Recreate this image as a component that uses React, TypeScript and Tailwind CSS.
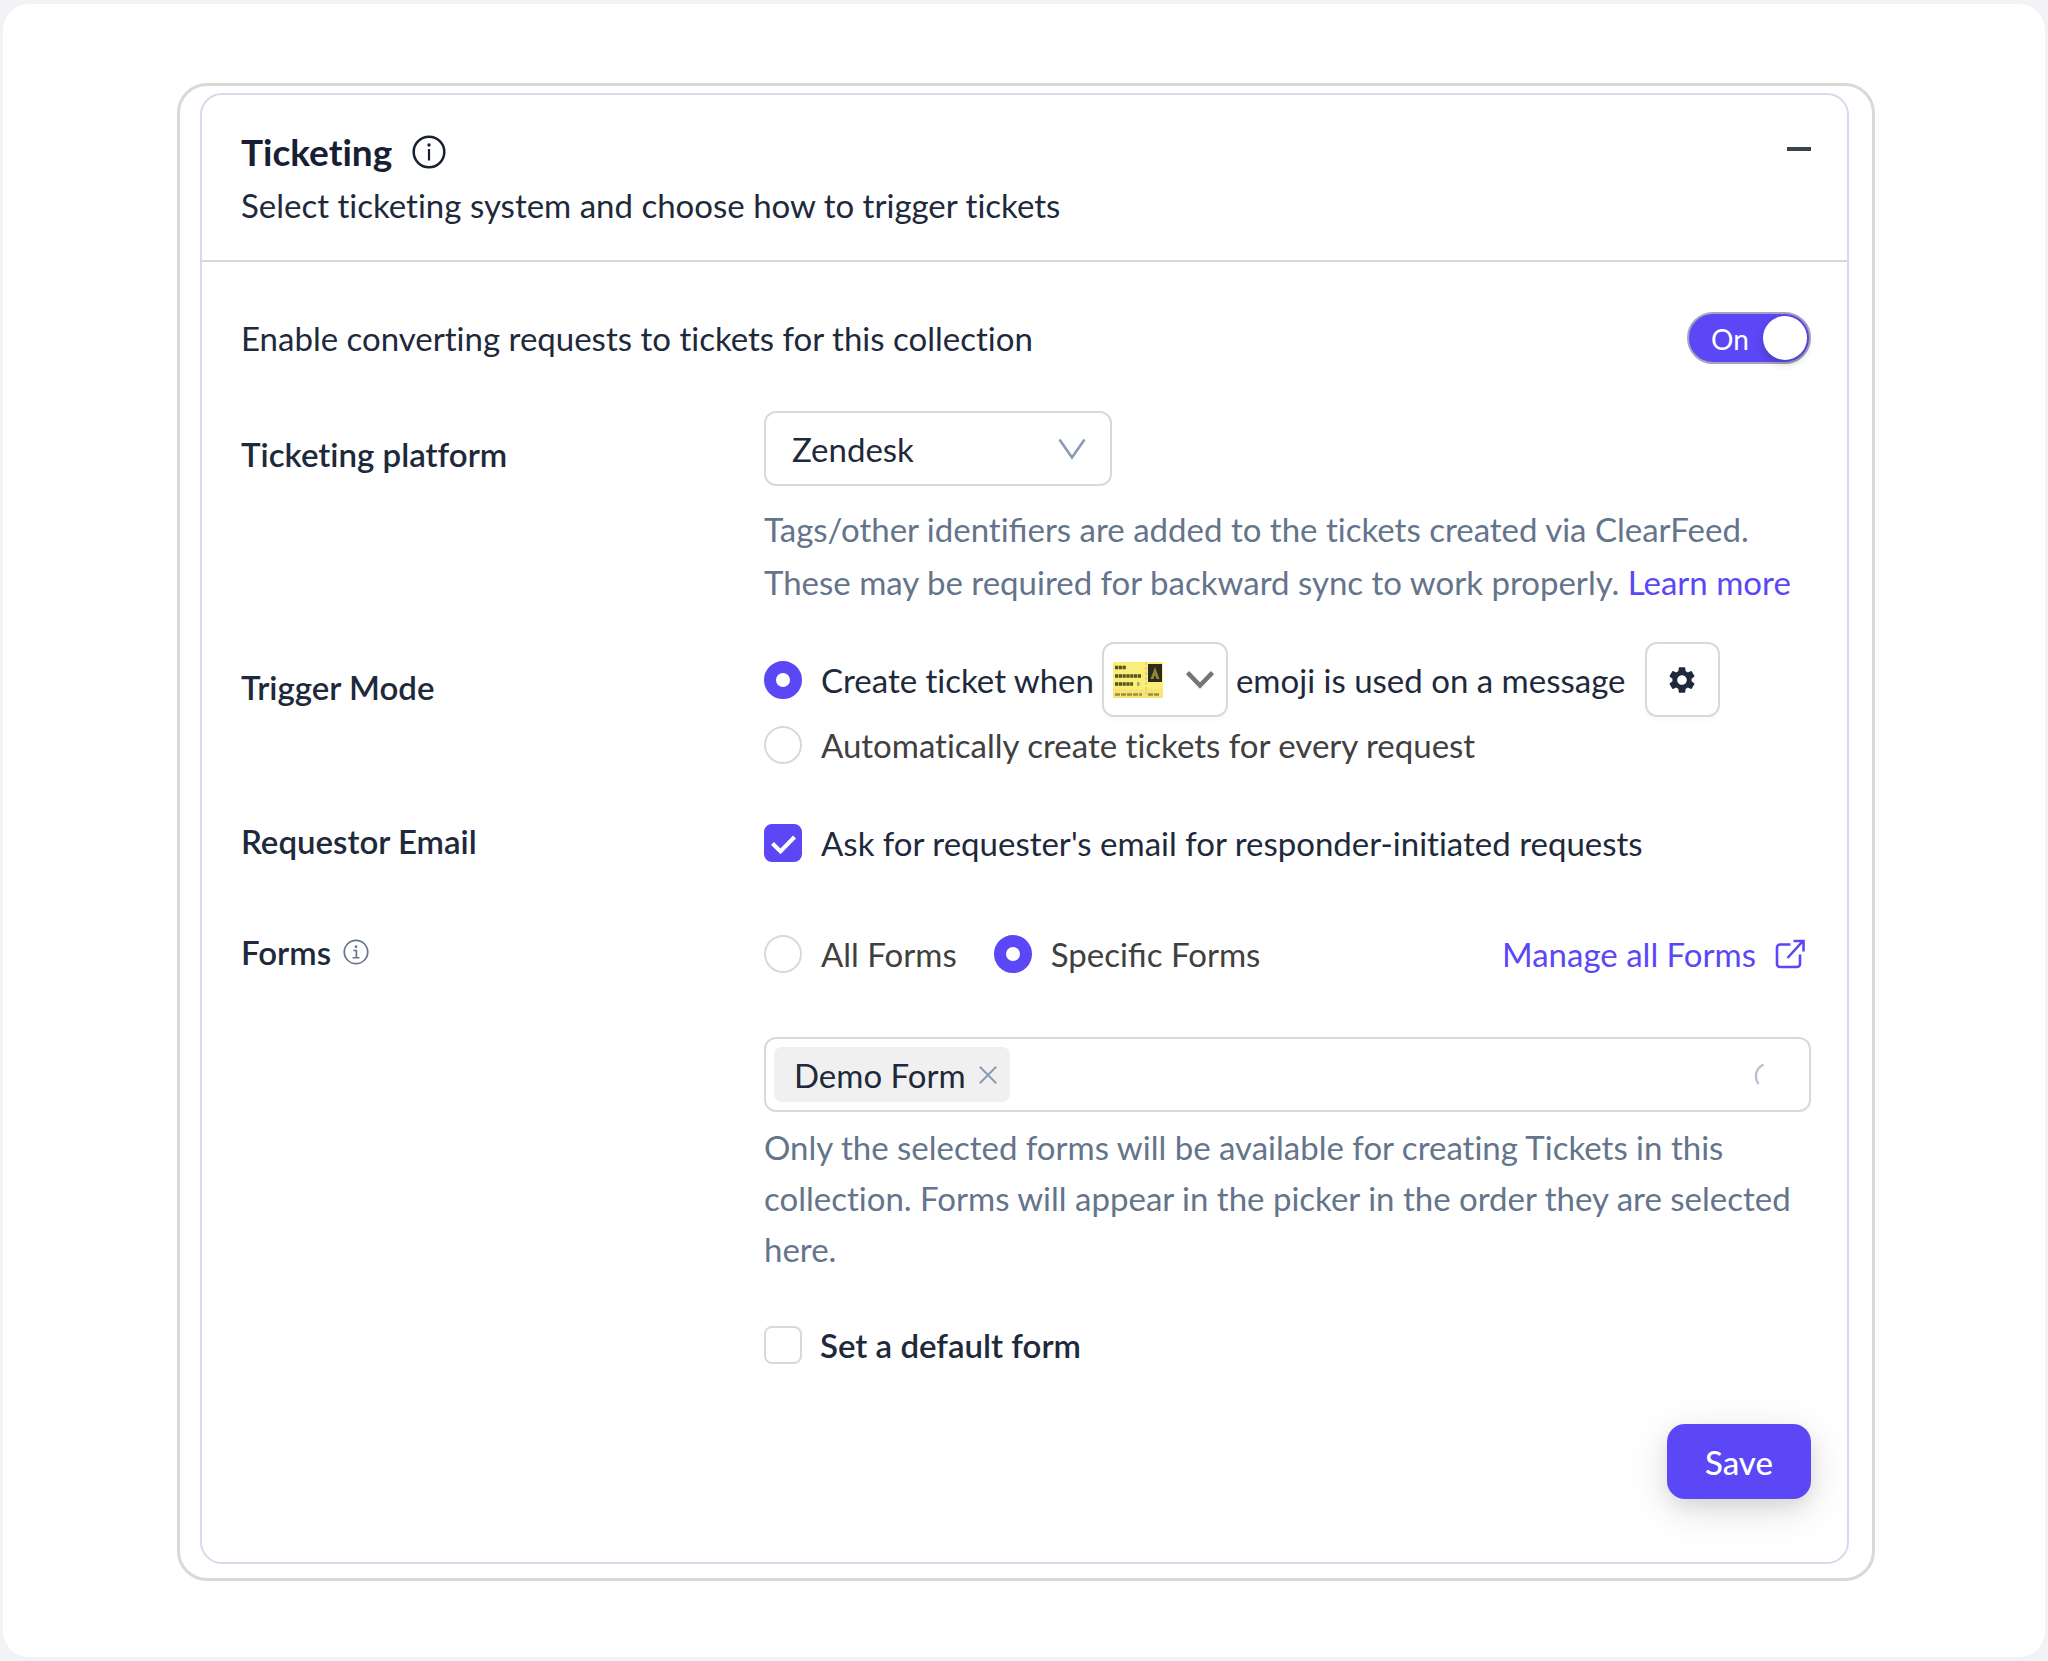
import React, { useState } from "react";

const labelClass = "text-[33px] leading-[48px] font-semibold text-[#1e293b]";
const radioClass =
  "size-[38px] shrink-0 appearance-none rounded-full border-2 border-[#d9d9d9] bg-white checked:border-[12px] checked:border-[#5b47f5]";
const checkClass =
  "col-start-1 row-start-1 size-[38px] appearance-none rounded-lg border-2 border-[#d9d9d9] bg-white checked:border-[#5b47f5] checked:bg-[#5b47f5]";

function Row({ label, labelPad, className, children }: {
  label: React.ReactNode;
  labelPad: string;
  className: string;
  children: React.ReactNode;
}) {
  return (
    <div className={`grid grid-cols-[523px_1fr] items-start ${className}`}>
      <div className={`${labelClass} ${labelPad}`}>{label}</div>
      <div className="min-w-0">{children}</div>
    </div>
  );
}

function InfoIcon({ className, serif }: { className: string; serif?: boolean }) {
  return (
    <svg viewBox="0 0 34 34" className={className} fill="none" stroke="currentColor" aria-hidden="true">
      <circle cx="17" cy="17" r="15.3" strokeWidth={serif ? 2.2 : 2.5} />
      <circle cx="17" cy="10" r="1.7" fill="currentColor" stroke="none" />
      {serif ? (
        <path d="M13.5 15h4v9.5M12.5 24.5h9" strokeWidth="2.2" />
      ) : (
        <path d="M17 14v11.5" strokeWidth="2.2" />
      )}
    </svg>
  );
}

function TicketArt() {
  return (
    <svg viewBox="0 0 50 36" className="h-9 w-[50px]" aria-hidden="true">
      <rect width="50" height="36" fill="#fbee78" />
      <rect y="27" width="50" height="9" fill="#f8e472" />
      <path d="M33 0v36" stroke="#d8cf8a" strokeWidth="1.5" strokeDasharray="3 2" />
      <g fill="none" stroke="#57521f" strokeWidth="3.6">
        <path d="M2 5.500h11" strokeDasharray="3.200 .6" />
        <path d="M2 14h26" strokeDasharray="3.200 .6" />
        <path d="M2 22h18" strokeDasharray="3.200 .6" />
        <path d="M24 22h2.500" opacity=".5" />
      </g>
      <path d="M2 32.500h27M35 32.500h12" stroke="#9b8f3a" strokeWidth="2.500" strokeDasharray="5 1" />
      <rect x="35" y="2" width="14" height="18" fill="#2b2a1b" />
      <path d="M42 5l4.500 12h-3L42 13l-1.500 4h-3z" fill="#8f863a" />
    </svg>
  );
}

function CheckBox({ id, checked, onChange }: { id: string; checked: boolean; onChange: () => void }) {
  return (
    <span className="grid shrink-0 place-items-center">
      <input id={id} type="checkbox" className={checkClass} checked={checked} onChange={onChange} />
      {checked && (
        <svg viewBox="0 0 38 38" className="pointer-events-none col-start-1 row-start-1 size-[38px]" fill="none" stroke="#fff" strokeWidth="4" aria-hidden="true">
          <path d="M8.500 19.500l8 8L30.500 13" />
        </svg>
      )}
    </span>
  );
}

function Fi() {
  return <span className="[font-variant-ligatures:normal]">fi</span>;
}

export default function App() {
  const [on, setOn] = useState(true);
  const [mode, setMode] = useState("emoji");
  const [ask, setAsk] = useState(true);
  const [scope, setScope] = useState("specific");
  const [hasDefault, setHasDefault] = useState(false);

  return (
    <div className="min-h-screen bg-[#f1f3f6] px-[3px] py-1 font-['Lato',sans-serif] text-[33px] leading-[52px] text-[#1e293b] [font-variant-ligatures:none]">
      <div className="min-h-[calc(100vh-8px)] rounded-[26px] bg-white pt-[79px] pr-[170px] pb-[75px] pl-[174px]">
        <main className="rounded-[30px] border-[3px] border-[#d9d9d9] pt-[7px] pr-[23px] pb-[14px] pl-5">
          <section className="rounded-[22px] border-2 border-[#d6daeb]">
            <header className="flex items-start justify-between border-b-2 border-[#d9d9d9] pt-8 pr-9 pb-[29px] pl-[39px]">
              <div>
                <h1 className="mb-0.5 flex items-center gap-5 text-[37px] leading-[50px] font-bold text-[#172033]">
                  Ticketing
                  <button type="button" aria-label="About ticketing">
                    <InfoIcon className="size-[34px]" />
                  </button>
                </h1>
                <p>Select ticketing system and choose how to trigger tickets</p>
              </div>
              <button type="button" aria-label="Collapse section" className="grid h-11 w-6 place-items-center">
                <span className="h-1 w-6 bg-[#3b424f]" />
              </button>
            </header>

            <div className="pt-[50px] pr-9 pb-[63px] pl-[39px]">
              <div className="flex items-center justify-between">
                <span id="enable-label">Enable converting requests to tickets for this collection</span>
                <button
                  type="button"
                  role="switch"
                  aria-checked={on}
                  aria-labelledby="enable-label"
                  onClick={() => setOn(!on)}
                  className="flex h-[52px] w-[124px] items-center justify-between rounded-full border-2 border-[#a5a3bd] bg-[#5b47f5] pr-0.5 pl-[22px] text-[28px] text-white"
                >
                  <span className="pt-0.5">On</span>
                  <span className="size-11 rounded-full bg-white shadow-[0_4px_8px_rgba(0,35,11,0.2)]" />
                </button>
              </div>

              <Row className="mt-[47px]" labelPad="pt-[19px]" label={<label htmlFor="platform">Ticketing platform</label>}>
                <div className="grid w-[348px] items-center">
                  <select id="platform" className="col-start-1 row-start-1 h-[75px] w-full appearance-none rounded-xl border-2 border-[#d9d9d9] bg-white px-[26px]">
                    <option>Zendesk</option>
                  </select>
                  <svg viewBox="0 0 28 22" className="pointer-events-none col-start-1 row-start-1 mr-[26px] h-[22px] w-7 justify-self-end" fill="none" stroke="#8a9bb3" strokeWidth="2.600" aria-hidden="true">
                    <path d="M1.500 1.500L14 19.500 26.500 1.500" />
                  </svg>
                </div>
                <p className="mt-[17px] leading-[53px] text-[#64748b]">
                  Tags/other identi<Fi />ers are added to the tickets created via ClearFeed. These may be required for backward sync to work properly.{" "}
                  <a href="#learn-more" className="text-[#5b47f5]">Learn more</a>
                </p>
              </Row>

              <Row className="mt-[33px]" labelPad="pt-[21px]" label="Trigger Mode">
                <div className="flex items-center">
                  <input id="mode-emoji" name="mode" type="radio" className={radioClass} checked={mode === "emoji"} onChange={() => setMode("emoji")} />
                  <label htmlFor="mode-emoji" className="ml-[19px]">Create ticket when</label>
                  <button type="button" aria-label="Choose emoji" className="ml-2 flex h-[75px] w-[126px] items-center justify-between rounded-xl border-2 border-[#d9d9d9] pr-3 pl-[9px] shadow-[0_4px_4px_rgba(0,0,0,0.02)]">
                    <TicketArt />
                    <svg viewBox="0 0 28 20" className="h-5 w-7" fill="none" stroke="#757575" strokeWidth="4.500" aria-hidden="true">
                      <path d="M1.500 2.500L14 15.500 26.500 2.500" />
                    </svg>
                  </button>
                  <span className="ml-2">emoji is used on a message</span>
                  <button type="button" aria-label="Emoji settings" className="ml-[19px] grid size-[75px] place-items-center rounded-xl border-2 border-[#d9d9d9] shadow-[0_4px_4px_rgba(0,0,0,0.02)]">
                    <svg viewBox="0 0 24 24" className="size-8" fill="#1e293b" aria-hidden="true">
                      <path d="M19.140 12.940c.04-.3.060-.61.060-.94 0-.32-.02-.64-.07-.94l2.030-1.580a.49.49 0 0 0 .12-.61l-1.920-3.320a.488.488 0 0 0-.59-.22l-2.390.96c-.5-.38-1.030-.7-1.620-.94l-.36-2.540a.484.484 0 0 0-.48-.41h-3.840c-.24 0-.43.17-.47.41l-.36 2.540c-.59.24-1.130.57-1.620.94l-2.390-.96c-.22-.08-.47 0-.59.22L2.740 8.870c-.12.21-.08.47.12.61l2.030 1.580c-.05.3-.09.63-.09.94s.02.64.07.94l-2.030 1.580a.49.49 0 0 0-.12.61l1.920 3.320c.12.22.37.29.59.22l2.390-.96c.5.38 1.030.7 1.620.94l.36 2.540c.05.24.24.41.48.41h3.840c.24 0 .44-.17.47-.41l.36-2.540c.59-.24 1.130-.56 1.620-.94l2.390.96c.22.08.47 0 .59-.22l1.920-3.320c.12-.22.070-.47-.12-.61l-2.010-1.580zM12 15.600c-1.980 0-3.600-1.620-3.600-3.600s1.620-3.600 3.600-3.600 3.600 1.620 3.600 3.600-1.620 3.600-3.600 3.600z" />
                    </svg>
                  </button>
                </div>
                <div className="mt-0.5 flex items-center gap-[19px] text-[#404040]">
                  <input id="mode-auto" name="mode" type="radio" className={radioClass} checked={mode === "auto"} onChange={() => setMode("auto")} />
                  <label htmlFor="mode-auto">Automatically create tickets for every request</label>
                </div>
              </Row>

              <Row className="mt-[46px]" labelPad="pt-0" label="Requestor Email">
                <div className="flex items-center gap-[19px]">
                  <CheckBox id="ask" checked={ask} onChange={() => setAsk(!ask)} />
                  <label htmlFor="ask">Ask for requester's email for responder-initiated requests</label>
                </div>
              </Row>

              <Row
                className="mt-[59px]"
                labelPad="pt-0"
                label={
                  <span className="flex items-center gap-3">
                    Forms
                    <button type="button" aria-label="About forms" className="text-[#64748b]">
                      <InfoIcon serif className="size-[26px]" />
                    </button>
                  </span>
                }
              >
                <div className="flex items-center justify-between">
                  <div className="flex items-center gap-[19px] text-[#404040]">
                    <input id="scope-all" name="scope" type="radio" className={radioClass} checked={scope === "all"} onChange={() => setScope("all")} />
                    <label htmlFor="scope-all" className="mr-[18px]">All Forms</label>
                    <input id="scope-specific" name="scope" type="radio" className={radioClass} checked={scope === "specific"} onChange={() => setScope("specific")} />
                    <label htmlFor="scope-specific">Speci<Fi />c Forms</label>
                  </div>
                  <a href="#forms" className="mr-1.5 flex items-center gap-[19px] text-[#5b47f5]">
                    Manage all Forms
                    <svg viewBox="0 0 30 30" className="size-[30px]" fill="none" stroke="currentColor" strokeWidth="2.600" aria-hidden="true">
                      <path d="M15.500 5.500H5a3 3 0 0 0-3 3V25a3 3 0 0 0 3 3h17a3 3 0 0 0 3-3V15.500M12.500 19L27.500 2.500M18.500 2h10v10.500" />
                    </svg>
                  </a>
                </div>

                <div className="mt-[57px] flex h-[75px] items-center rounded-xl border-2 border-[#d9d9d9] pr-[44px] pl-2">
                  <span className="flex h-[55px] items-center gap-3 rounded-lg bg-[#f0f0f0] pr-3 pl-5">
                    Demo Form
                    <button type="button" aria-label="Remove Demo Form">
                      <svg viewBox="0 0 22 22" className="size-5" fill="none" stroke="#8a9bb3" strokeWidth="2.200" aria-hidden="true">
                        <path d="M2 2l18 18M20 2L2 20" />
                      </svg>
                    </button>
                  </span>
                  <input type="text" aria-label="Selected forms" className="min-w-0 flex-1 bg-transparent outline-none" />
                  <svg viewBox="0 0 12 24" className="h-6 w-3" fill="none" stroke="#b6c1d1" strokeWidth="2.400" aria-hidden="true">
                    <path d="M10.500 1.500C3 5.500 0.500 13 5.500 21" />
                  </svg>
                </div>
                <p className="mt-2.5 leading-[51px] text-[#64748b]">
                  Only the selected forms will be available for creating Tickets in this collection. Forms will appear in the picker in the order they are selected here.
                </p>
                <div className="mt-11 flex items-center gap-[18px]">
                  <CheckBox id="default" checked={hasDefault} onChange={() => setHasDefault(!hasDefault)} />
                  <label htmlFor="default" className="font-semibold">Set a default form</label>
                </div>
              </Row>

              <div className="mt-[53px] flex justify-end">
                <button type="button" className="h-[75px] rounded-[18px] bg-[#5b47f5] px-[38px] font-medium text-white shadow-[0_10px_40px_rgba(0,0,0,0.14),0_8px_16px_rgba(0,0,0,0.06)]">
                  Save
                </button>
              </div>
            </div>
          </section>
        </main>
      </div>
    </div>
  );
}
